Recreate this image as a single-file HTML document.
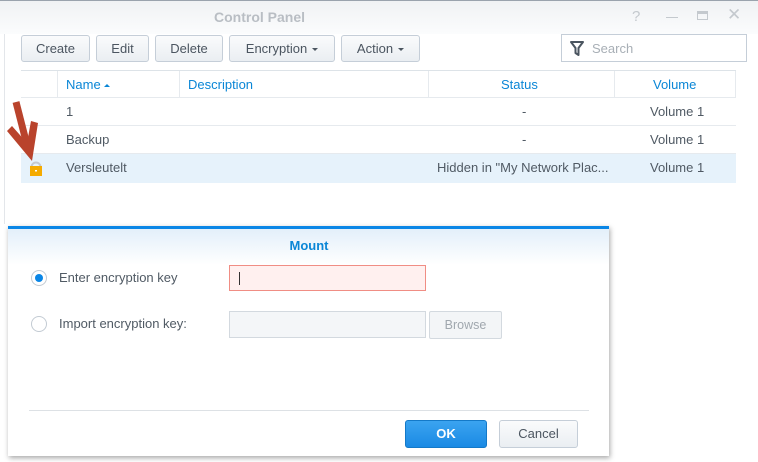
<!DOCTYPE html>
<html><head><meta charset="utf-8"><style>
*{box-sizing:border-box;margin:0;padding:0}
body{width:758px;height:462px;overflow:hidden;background:#fff;font-family:"Liberation Sans",sans-serif;font-size:12.5px;color:#505a64;position:relative}
.a{position:absolute}
.title{left:0;top:0;width:758px;height:34px;background:linear-gradient(#f0f2f4,#fbfcfd);border-top:1px solid #9aa3ad}
.btn{position:absolute;top:35px;height:27px;border:1px solid #c5ced8;border-radius:3px;background:linear-gradient(#fafbfc,#eaeef2);text-align:center;line-height:25px;color:#4b5560;font-size:13px}
.car{display:inline-block;border-left:3px solid transparent;border-right:3px solid transparent;border-top:3px solid #4b5560;vertical-align:middle;margin-left:5px}
.hd{color:#0a86d6;font-size:13px}
.row{position:absolute;left:21px;width:715px;height:28px;border-bottom:1px solid #e6eaee;line-height:28px;font-size:13px}
.c{position:absolute;top:0}
</style></head><body>
<div class="a title"></div>
<div class="a" style="left:214px;top:9px;font-weight:bold;font-size:14px;color:#b9bec4">Control Panel</div>
<div class="a" style="left:632px;top:8px;color:#c4c9ce;font-size:15px">?</div>
<div class="a" style="left:666px;top:17px;width:12px;height:1px;background:#c4c9ce"></div>
<div class="a" style="left:697px;top:11px;width:11px;height:9px;border:1px solid #c4c9ce;border-top-width:3px"></div>
<div class="a" style="left:727px;top:5px;color:#c4c9ce;font-size:17px">✕</div>
<div class="a" style="left:4px;top:34px;width:1px;height:190px;background:#e3e6ea"></div>
<div class="btn" style="left:21px;width:69px">Create</div>
<div class="btn" style="left:96px;width:53px">Edit</div>
<div class="btn" style="left:155px;width:68px">Delete</div>
<div class="btn" style="left:229px;width:106px">Encryption<span class="car"></span></div>
<div class="btn" style="left:341px;width:79px">Action<span class="car"></span></div>
<div class="a" style="left:561px;top:34px;width:186px;height:28px;border:1px solid #c5ced8;background:#fff"></div>
<svg class="a" style="left:570px;top:41px" width="14" height="15" viewBox="0 0 14 15"><path d="M1 1H13L8.5 7V14L5.5 12V7Z" fill="none" stroke="#4b5560" stroke-width="2" stroke-linejoin="round"/></svg>
<div class="a" style="left:592px;top:41px;color:#a8afb6;font-size:13px">Search</div>
<div class="a" style="left:21px;top:70px;width:715px;height:1px;background:#dde3e8"></div>
<div class="a" style="left:21px;top:97px;width:715px;height:1px;background:#e6eaee"></div>
<div class="a" style="left:57px;top:71px;width:1px;height:26px;background:#e6eaee"></div>
<div class="a" style="left:179px;top:71px;width:1px;height:26px;background:#e6eaee"></div>
<div class="a" style="left:428px;top:71px;width:1px;height:26px;background:#e6eaee"></div>
<div class="a" style="left:614px;top:71px;width:1px;height:26px;background:#e6eaee"></div>
<div class="a" style="left:735px;top:71px;width:1px;height:26px;background:#e6eaee"></div>
<div class="a hd" style="left:66px;top:77px">Name <span style="display:inline-block;border-left:3px solid transparent;border-right:3px solid transparent;border-bottom:3px solid #0a86d6;vertical-align:middle"></span></div>
<div class="a hd" style="left:188px;top:77px">Description</div>
<div class="a hd" style="left:501px;top:77px">Status</div>
<div class="a hd" style="left:653px;top:77px">Volume</div>
<div class="row" style="top:98px"><span class="c" style="left:45px">1</span><span class="c" style="left:501px">-</span><span class="c" style="left:629px">Volume 1</span></div>
<div class="row" style="top:126px"><span class="c" style="left:45px">Backup</span><span class="c" style="left:501px">-</span><span class="c" style="left:629px">Volume 1</span></div>
<div class="row" style="top:154px;background:#e6f2fb;border-bottom:none;height:29px"><span class="c" style="left:45px">Versleutelt</span><span class="c" style="left:416px">Hidden in "My Network Plac...</span><span class="c" style="left:629px">Volume 1</span></div>
<svg class="a" style="left:0;top:95px" width="60" height="90" viewBox="0 0 60 90">
<path d="M31.5 72a4.5 4.5 0 0 1 9 0v4" fill="none" stroke="#c4c9ce" stroke-width="2"/>
<rect x="30" y="71" width="12" height="10" fill="#f5ab00"/>
<rect x="35" y="75" width="2" height="1.5" fill="#fff"/>
<path d="M16 7L27 50" stroke="#b9432c" stroke-width="7" stroke-linecap="butt"/>
<path d="M7 36L12 31L27 48L31 26L38 28L32 66Z" fill="#b9432c"/>
</svg>
<div class="a" style="left:8px;top:226px;width:601px;height:230px;background:#fff;box-shadow:1px 2px 5px rgba(0,0,0,.35);border-top:3px solid #0a86e6"></div>
<div class="a" style="left:8px;top:229px;width:601px;height:36px;background:linear-gradient(#e3effa,#fff)"></div>
<div class="a" style="left:0;top:238px;width:618px;text-align:center;color:#0a86d6;font-weight:bold;font-size:13px">Mount</div>
<div class="a" style="left:31px;top:270px;width:16px;height:16px;border:1px solid #c3cbd3;border-radius:50%;background:#fff"><div style="margin:3px;width:8px;height:8px;border-radius:50%;background:#0a86e6"></div></div>
<div class="a" style="left:59px;top:270px;font-size:13px">Enter encryption key</div>
<div class="a" style="left:229px;top:265px;width:197px;height:26px;border:1px solid #f08d84;background:#fff0ef"></div>
<div class="a" style="left:239px;top:272px;width:1px;height:13px;background:#333"></div>
<div class="a" style="left:31px;top:316px;width:16px;height:16px;border:1px solid #c3cbd3;border-radius:50%;background:#fff"></div>
<div class="a" style="left:59px;top:316px;font-size:13px">Import encryption key:</div>
<div class="a" style="left:229px;top:311px;width:197px;height:27px;border:1px solid #d3d9df;background:#f4f6f8"></div>
<div class="a" style="left:429px;top:311px;width:73px;height:28px;border:1px solid #d3d9df;border-radius:2px;background:#f3f5f7;text-align:center;line-height:26px;color:#a0a7ae">Browse</div>
<div class="a" style="left:29px;top:410px;width:560px;height:1px;background:#dde1e5"></div>
<div class="a" style="left:405px;top:420px;width:82px;height:28px;border:1px solid #1479c8;border-radius:3px;background:linear-gradient(#3ba4f0,#1a8ae4);color:#fff;text-align:center;line-height:26px;font-weight:bold;font-size:13px">OK</div>
<div class="a" style="left:499px;top:420px;width:79px;height:28px;border:1px solid #c5ced8;border-radius:3px;background:linear-gradient(#fafbfc,#eaeef2);color:#4b5560;text-align:center;line-height:26px;font-size:13px">Cancel</div>
</body></html>
